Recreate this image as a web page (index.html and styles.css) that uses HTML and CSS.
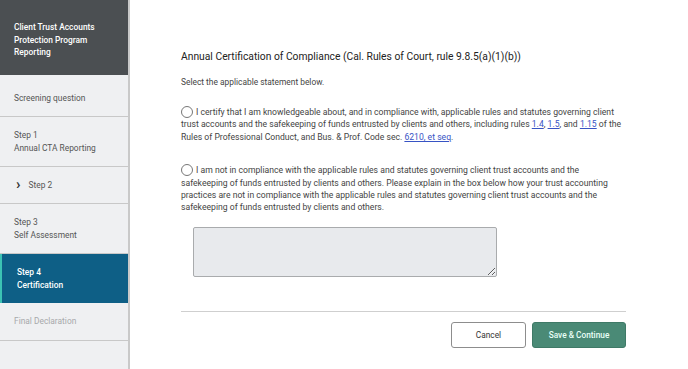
FILE: index.html
```html
<!DOCTYPE html>
<html lang="en">
    <head>
        <meta charset="UTF-8" />
        <title>Client Trust Accounts Protection Program Reporting</title>
        <link rel="stylesheet" href="styles.css">
    </head>

    <body>
        <div class="page">
            <!-- left step navigation -->
            <nav class="sidebar">
                <div class="sidebar-head">Client Trust Accounts Protection Program Reporting</div>
                <div class="step step-short step-first">Screening question</div>
                <div class="step">Step 1<br />Annual CTA Reporting</div>
                <div class="step step-short step-open"><span class="chev">&#x203A;</span>Step 2</div>
                <div class="step">Step 3<br />Self Assessment</div>
                <div class="step step-active">Step 4<br />Certification</div>
                <div class="step step-short step-muted">Final Declaration</div>
            </nav>

            <main class="content">
                <h1 class="title">Annual Certification of Compliance (Cal. Rules of Court, rule 9.8.5(a)(1)(b))</h1>
                <p class="hint">Select the applicable statement below.</p>

                <label class="option">
                    <span class="radio"></span>I certify that I am knowledgeable about, and in compliance with, applicable rules and statutes governing client trust accounts and the safekeeping of funds entrusted by clients and others, including rules <a href="#">1.4</a>, <a href="#">1.5</a>, and <a href="#">1.15</a> of the Rules of Professional Conduct, and Bus. &amp; Prof. Code sec. <a href="#">6210, et seq</a>.
                </label>

                <label class="option option-two">
                    <span class="radio"></span>I am not in compliance with the applicable rules and statutes governing client trust accounts and the safekeeping of funds entrusted by clients and others. Please explain in the box below how your trust accounting practices are not in compliance with the applicable rules and statutes governing client trust accounts and the safekeeping of funds entrusted by clients and others.
                </label>

                <textarea class="explain"></textarea>

                <div class="actions">
                    <button class="btn btn-cancel">Cancel</button>
                    <button class="btn btn-save">Save &amp; Continue</button>
                </div>
            </main>
        </div>
    </body>
</html>
```

FILE: styles.css
```css
* {
    margin: 0;
    padding: 0;
    box-sizing: border-box;
}

html,
body {
    height: 100%;
}

body {
    background: #fff;
    font-family: Roboto, "Noto Sans", Arial, sans-serif;
    color: #333;
    overflow: hidden;
}

.page {
    display: flex;
    height: 100%;
}

/* sidebar */
.sidebar {
    width: 130px;
    flex-shrink: 0;
    background: #eff0f2;
    border-right: 2px solid #c9c9c9;
    font-size: 8.4px;
    line-height: 12.5px;
}

.sidebar-head {
    height: 75px;
    background: #4b4f52;
    color: #fff;
    font-weight: 500;
    padding: 21px 20px 0 14px;
}

.step {
    height: 50px;
    display: flex;
    flex-direction: column;
    justify-content: center;
    padding-left: 14px;
    color: #555;
    border-bottom: 1px solid #c8c8c8;
}

.step-short {
    height: 42px;
}

.step-first {
    padding-top: 5px;
}

.step-open {
    height: 37px;
    flex-direction: row;
    align-items: center;
    justify-content: flex-start;
    padding-left: 16px;
}

.chev {
    font-size: 15px;
    font-weight: 700;
    color: #333;
    margin-right: 8px;
    margin-top: -2px;
}

.step-active {
    height: 49px;
    background: #0e5f86;
    color: #fff;
    font-weight: 500;
    border-left: 2px solid #3cc3b4;
    border-bottom: none;
    padding-left: 15px;
}

.step-muted {
    height: 38px;
    color: #a7a9ab;
}

/* main content */
.content {
    flex: 1;
    padding: 49px 0 0 51px;
    max-width: 670px;
}

.title {
    font-size: 10.3px;
    font-weight: 400;
    color: #222;
    line-height: 16px;
}

.hint {
    font-size: 8.4px;
    color: #444;
    margin-top: 12px;
}

.option {
    display: block;
    font-size: 8.65px;
    line-height: 12.4px;
    color: #444;
    margin-top: 19px;
    width: 445px;
}

.option-two {
    margin-top: 21px;
}

.option a {
    color: #3753c4;
}

.radio {
    display: inline-block;
    width: 12px;
    height: 12px;
    border: 1px solid #777;
    border-radius: 50%;
    background: #fff;
    vertical-align: -3px;
    margin-right: 3px;
}

.explain {
    display: block;
    width: 304px;
    height: 50px;
    margin: 13px 0 0 12px;
    background: #e8eaed;
    border: 1px solid #a9abad;
    border-radius: 2px;
}

.actions {
    width: 445px;
    margin-top: 34px;
    border-top: 1px solid #cfcfcf;
    display: flex;
    justify-content: flex-end;
    gap: 6px;
    padding-top: 10px;
}

.btn {
    height: 26px;
    font-family: Roboto, Arial, sans-serif;
    font-size: 8.3px;
    border-radius: 3px;
}

.btn-cancel {
    width: 75px;
    background: #fff;
    color: #333;
    border: 1px solid #8d8d8d;
}

.btn-save {
    width: 94px;
    background: #4a8a76;
    color: #e8fff6;
    font-weight: 500;
    border: 1px solid #3f7a67;
}
```
